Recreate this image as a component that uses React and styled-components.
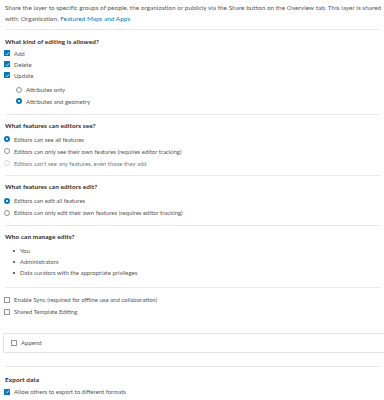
import React from 'react';
import styled, { createGlobalStyle } from 'styled-components';

const Global = createGlobalStyle`
  html, body { margin: 0; padding: 0; background: #fff; }
  body { font-family: Lato, "Open Sans", sans-serif; color: #555; -webkit-font-smoothing: antialiased; }
`;

const Page = styled.div`
  width: 384px;
  height: 400px;
  overflow: hidden;
  box-sizing: border-box;
  padding-top: 1.5px;
`;

const Intro = styled.p`
  margin: 0 0 5.5px 5px;
  font-size: 6.4px;
  letter-spacing: 0.025px;
  line-height: 11px;
`;

const Link = styled.span`
  color: #0079c1;
`;

const Section = styled.section`
  border-top: 1px solid #e9e9e9;
  margin: 0 4px 0 5px;
  padding: ${(p) => p.$pt}px 0 ${(p) => p.$pb}px 0;
`;

const Heading = styled.div`
  font-size: 6.4px;
  font-weight: 700;
  letter-spacing: 0.1px;
  color: #2b2b2b;
  height: 10px;
  line-height: 10px;
  margin-bottom: ${(p) => p.$mb || 0}px;
`;

const Row = styled.div`
  display: flex;
  align-items: center;
  gap: 4px;
  height: ${(p) => p.$h || 11}px;
  font-size: 6px;
  margin-left: ${(p) => p.$indent || -1}px;
  color: ${(p) => (p.$muted ? '#7a7a7a' : '#555')};
`;

const SubGroup = styled.div`
  margin-top: ${(p) => p.$mt}px;
`;

const Box = styled.span`
  width: 6px;
  height: 6px;
  box-sizing: border-box;
  flex: none;
  border-radius: 0.5px;
  display: flex;
  align-items: center;
  justify-content: center;
  background: ${(p) => (p.$checked ? '#0079c1' : '#fff')};
  border: ${(p) => (p.$checked ? 'none' : '0.75px solid #949494')};
`;

const Radio = styled.span`
  width: 6px;
  height: 6px;
  box-sizing: border-box;
  flex: none;
  border-radius: 50%;
  background: #fff;
  border: ${(p) =>
    p.$checked ? '2px solid #0079c1' : p.$disabled ? '0.75px solid #d8d8d8' : '0.75px solid #949494'};
`;

const Bullets = styled.ul`
  margin: ${(p) => p.$mt}px 0 0 0;
  padding: 0;
  list-style: none;
`;

const Bullet = styled.li`
  display: flex;
  align-items: center;
  height: 11px;
  font-size: 6px;
  padding-left: 8px;
  gap: 5px;
  &::before {
    content: '';
    flex: none;
    width: 2px;
    height: 2px;
    border-radius: 50%;
    background: #3a3a3a;
  }
`;

const Card = styled.div`
  margin: 13px -10px 12.5px 3px;
  border: 1px solid #e4e4e4;
  border-radius: 1px;
  height: 20.5px;
  box-sizing: border-box;
  display: flex;
  align-items: center;
  padding-left: 8px;
`;

const Check = ({ checked }) => (
  <Box $checked={checked}>
    {checked && (
      <svg width="5" height="5" viewBox="0 0 10 10">
        <path d="M2 5.2 L4.2 7.4 L8.2 2.8" stroke="#fff" strokeWidth="1.6" fill="none" />
      </svg>
    )}
  </Box>
);

export default function App() {
  return (
    <Page>
      <Global />
      <Intro>
        Share the layer to specific groups of people, the organization or publicly via the Share button on the Overview tab. This layer is shared with: Organization, <Link>Featured Maps and Apps</Link>
      </Intro>

      <Section $pt={7} $pb={7}>
        <Heading $mb={0.5}>What kind of editing is allowed?</Heading>
        <Row><Check checked />Add</Row>
        <Row><Check checked />Delete</Row>
        <Row><Check checked />Update</Row>
        <SubGroup $mt={3.5}>
          <Row $h={11.5} $indent={11}><Radio />Attributes only</Row>
          <Row $h={11.5} $indent={11}><Radio $checked />Attributes and geometry</Row>
        </SubGroup>
      </Section>

      <Section $pt={5.5} $pb={6}>
        <Heading $mb={2.5}>What features can editors see?</Heading>
        <Row $h={12}><Radio $checked />Editors can see all features</Row>
        <Row $h={12}><Radio />Editors can only see their own features (requires editor tracking)</Row>
        <Row $h={12} $muted><Radio $disabled />Editors can't see any features, even those they add</Row>
      </Section>

      <Section $pt={5.5} $pb={6}>
        <Heading $mb={3}>What features can editors edit?</Heading>
        <Row $h={12}><Radio $checked />Editors can edit all features</Row>
        <Row $h={12}><Radio />Editors can only edit their own features (requires editor tracking)</Row>
      </Section>

      <Section $pt={6} $pb={8.5}>
        <Heading>Who can manage edits?</Heading>
        <Bullets $mt={3.5}>
          <Bullet>You</Bullet>
          <Bullet>Administrators</Bullet>
          <Bullet>Data curators with the appropriate privileges</Bullet>
        </Bullets>
      </Section>

      <Section $pt={6} $pb={2}>
        <Row $h={12}><Check />Enable Sync (required for offline use and collaboration)</Row>
        <Row $h={12}><Check />Shared Template Editing</Row>
      </Section>

      <Card>
        <Row><Check />Append</Row>
      </Card>

      <Section $pt={8} $pb={4}>
        <Heading $mb={1.5}>Export data</Heading>
        <Row><Check checked />Allow others to export to different formats</Row>
      </Section>
    </Page>
  );
}
